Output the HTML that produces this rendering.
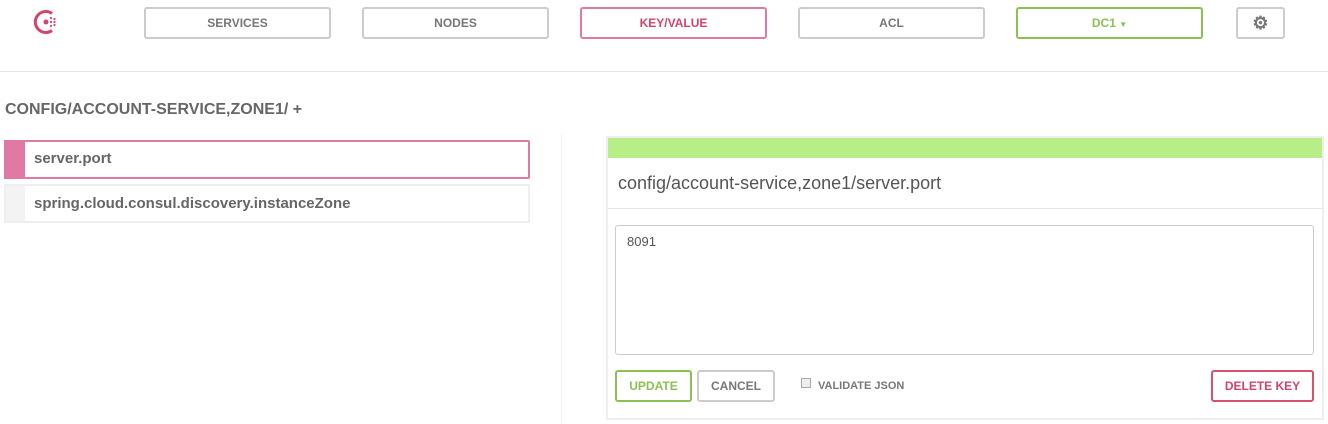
<!DOCTYPE html>
<html><head><style>
*{box-sizing:border-box;margin:0;padding:0}
body{width:1328px;height:424px;background:#fff;font-family:"Liberation Sans",Arial,sans-serif;position:relative;overflow:hidden;color:#555}
.a{position:absolute}
.nb{position:absolute;top:7px;height:32px;width:187px;border:2px solid #ccc;border-radius:3px;font-size:12px;color:#777;text-align:center;line-height:28px;font-weight:bold}
.btn{position:absolute;top:370px;height:32px;border:2px solid #ccc;border-radius:3px;font-size:12px;font-weight:bold;text-align:center;line-height:28px;color:#777}
</style></head><body>
<svg class="a" style="left:33px;top:8px" width="28" height="28" viewBox="0 0 28 28">
<path d="M19 5.5 A10.5 10.5 0 1 0 19 22.5" fill="none" stroke="#d6436a" stroke-width="3"/>
<circle cx="13" cy="14" r="2.5" fill="#d6436a"/>
<g fill="#d6436a"><circle cx="18" cy="14" r="1.1"/><circle cx="21.5" cy="11" r="1.1"/><circle cx="21.5" cy="14" r="1.1"/><circle cx="21.5" cy="17" r="1.1"/><circle cx="18" cy="10" r="1.1"/><circle cx="18" cy="18" r="1.1"/></g>
</svg>
<div class="nb" style="left:144px">SERVICES</div>
<div class="nb" style="left:362px">NODES</div>
<div class="nb" style="left:580px;border-color:#e07aa5;color:#d6436a">KEY/VALUE</div>
<div class="nb" style="left:798px">ACL</div>
<div class="nb" style="left:1016px;border-color:#8cc152;color:#8cc152">DC1 <span style="font-size:8px">▼</span></div>
<div class="nb" style="left:1236px;width:49px;font-size:18px;color:#777">⚙</div>
<div class="a" style="left:0;top:71px;width:1328px;height:1px;background:#e5e5e5"></div>
<div class="a" style="left:5px;top:101px;font-size:16px;font-weight:bold;color:#666">CONFIG/ACCOUNT-SERVICE,ZONE1/ +</div>
<div class="a" style="left:4px;top:140px;width:526px;height:39px;border:2px solid #e07aa5;border-radius:2px"></div>
<div class="a" style="left:4px;top:140px;width:21px;height:39px;background:#e07aa5"></div>
<div class="a" style="left:34px;top:150px;font-size:15px;font-weight:bold;color:#666">server.port</div>
<div class="a" style="left:4px;top:184px;width:526px;height:39px;border:2px solid #eee"></div>
<div class="a" style="left:6px;top:186px;width:19px;height:35px;background:#f3f3f3"></div>
<div class="a" style="left:34px;top:195px;font-size:15px;font-weight:bold;color:#666">spring.cloud.consul.discovery.instanceZone</div>
<div class="a" style="left:561px;top:135px;width:1px;height:289px;background:#eee"></div>
<div class="a" style="left:606px;top:136px;width:718px;height:284px;border:2px solid #eee"></div>
<div class="a" style="left:608px;top:138px;width:714px;height:20px;background:#b7ee87"></div>
<div class="a" style="left:618px;top:173px;font-size:18px;color:#555">config/account-service,zone1/server.port</div>
<div class="a" style="left:608px;top:208px;width:714px;height:1px;background:#e5e5e5"></div>
<div class="a" style="left:615px;top:225px;width:699px;height:130px;border:1px solid #ccc;border-radius:3px"></div>
<div class="a" style="left:627px;top:234px;font-size:13px;color:#555">8091</div>
<div class="btn" style="left:615px;width:77px;border-color:#8cc152;color:#8cc152">UPDATE</div>
<div class="btn" style="left:697px;width:78px">CANCEL</div>
<div class="a" style="left:801px;top:378px;width:10px;height:10px;border:1px solid #aaa;background:#eee"></div>
<div class="a" style="left:818px;top:380px;font-size:11px;font-weight:bold;color:#777">VALIDATE JSON</div>
<div class="btn" style="left:1211px;width:103px;border-color:#d6526f;color:#d6436a">DELETE KEY</div>
</body></html>
